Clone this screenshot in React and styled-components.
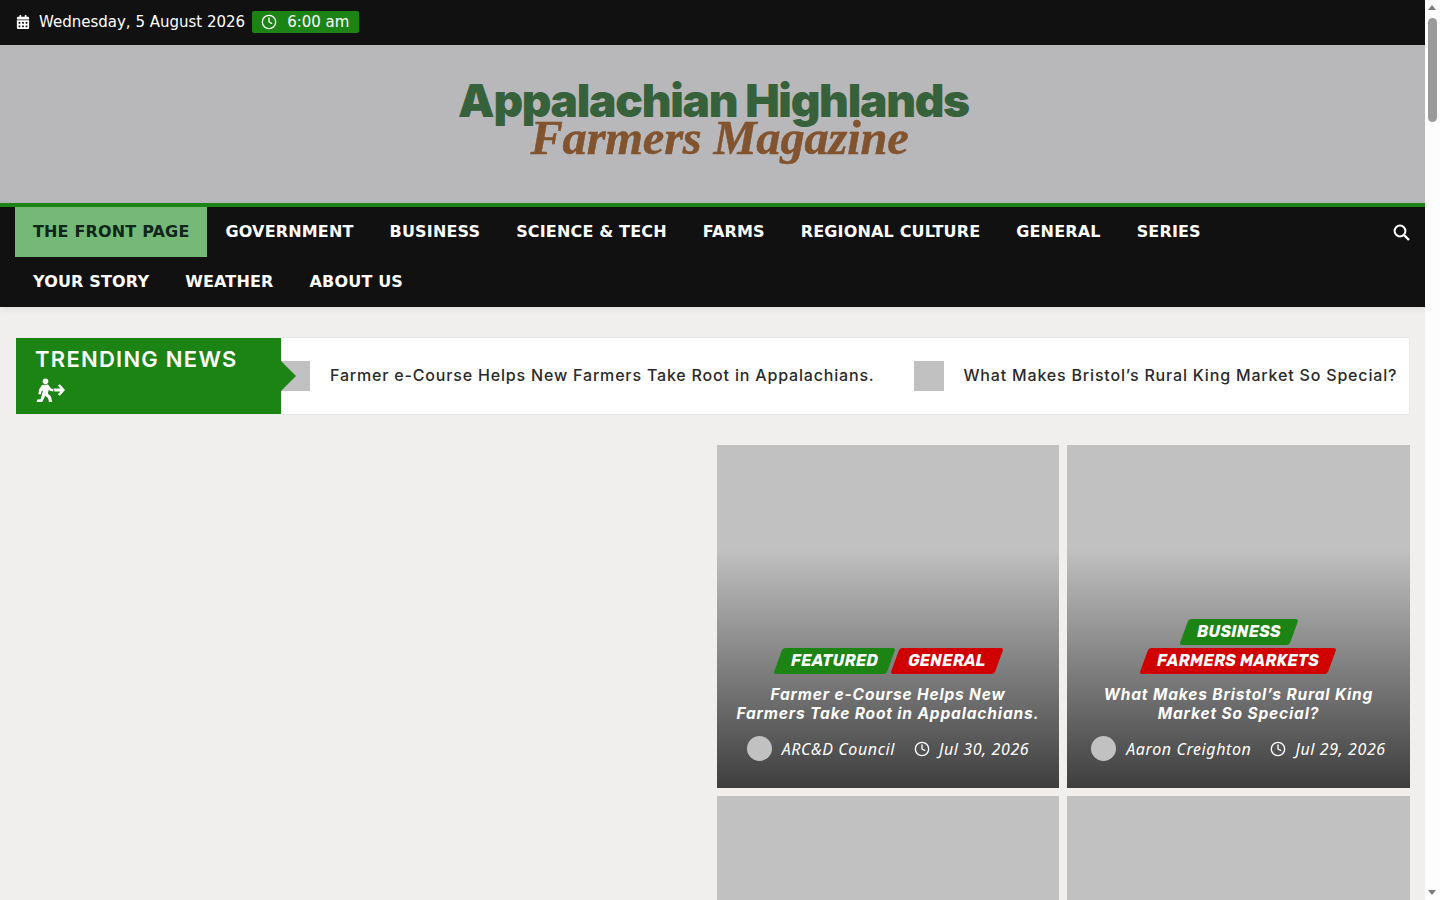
import React from "react";
import styled, { createGlobalStyle } from "styled-components";
import { FaCalendarAlt } from "react-icons/fa";
import { FiClock } from "react-icons/fi";

const GlobalStyle = createGlobalStyle`
  * { box-sizing: border-box; }
  body {
    margin: 0;
    background: #f0efed;
    font-family: "DejaVu Sans", sans-serif;
    color: #222;
  }
`;

const Page = styled.div`
  min-height: 7500px;
  padding-right: 15px;
`;

const ScrollTrack = styled.div`
  position: fixed;
  top: 0;
  right: 0;
  bottom: 0;
  width: 15px;
  background: #fdfdfd;
`;

const ScrollThumb = styled.div`
  position: absolute;
  top: 18px;
  left: 3px;
  width: 9px;
  height: 104px;
  border-radius: 5px;
  background: #9a9a9a;
`;

const ScrollArrow = styled.div`
  position: absolute;
  left: 3px;
  ${(props) => (props.$down ? "bottom: 5px;" : "top: 5px;")}
  border-left: 4.5px solid transparent;
  border-right: 4.5px solid transparent;
  ${(props) =>
    props.$down ? "border-top: 5px solid #7b7b7b;" : "border-bottom: 5px solid #7b7b7b;"}
`;

const TopBar = styled.div`
  height: 45px;
  background: #111112;
  color: #fff;
  display: flex;
  align-items: center;
  padding: 0 16px 2px;
  font-size: 15px;
`;

const DateText = styled.span`
  margin-left: 9px;
`;

const TimeBadge = styled.span`
  display: flex;
  align-items: center;
  gap: 10px;
  height: 22px;
  margin-left: 7px;
  padding: 0 10px 0 9px;
  background: #1b8415;
  border-radius: 2px;
`;

const Masthead = styled.header`
  height: 158px;
  background: #b8b8ba;
  display: flex;
  flex-direction: column;
  align-items: center;
  padding-top: 28px;
`;

const LogoTop = styled.div`
  padding-left: 2px;
  font-family: Inter, sans-serif;
  font-weight: 900;
  font-size: 46px;
  line-height: 54px;
  letter-spacing: -1.3px;
  color: #36613b;
`;

const LogoBottom = styled.div`
  margin-top: -15px;
  padding-left: 14px;
  font-family: "Liberation Serif", serif;
  font-weight: 700;
  font-style: italic;
  font-size: 48.5px;
  line-height: 52px;
  letter-spacing: -0.2px;
  -webkit-text-stroke: 0.5px #82532f;
  color: #82532f;
`;

const NavBar = styled.nav`
  background: #111112;
  border-top: 4px solid #1b8415;
  padding: 0 15px;
  display: flex;
  align-items: flex-start;
  justify-content: space-between;
  box-shadow: 0 2px 6px rgba(0, 0, 0, 0.08);
`;

const NavList = styled.div`
  display: flex;
  flex-wrap: wrap;
  width: 1240px;
`;

const NavItem = styled.a`
  height: 50px;
  display: flex;
  align-items: center;
  padding: 0 18px 2px;
  font-size: 16px;
  font-weight: 700;
  letter-spacing: 0.16px;
  text-transform: uppercase;
  color: ${(props) => (props.$active ? "#10261a" : "#fff")};
  background: ${(props) => (props.$active ? "#76b877" : "transparent")};
`;

const SearchButton = styled.span`
  color: #fff;
  height: 50px;
  display: flex;
  align-items: center;
`;

const Content = styled.main`
  padding: 30px 15px 0 16px;
`;

const Trending = styled.section`
  height: 78px;
  background: #fff;
  border: 1px solid #e8e8e8;
  border-left: 0;
  display: flex;
  align-items: center;
  overflow: hidden;
`;

const TrendingLabel = styled.div`
  position: relative;
  z-index: 1;
  flex: 0 0 265px;
  height: 76px;
  background: #1b8415;
  color: #fff;
  padding: 7px 19px 7px 20px;
  font-family: Inter, sans-serif;
  font-size: 22px;
  font-weight: 600;
  letter-spacing: 1.25px;
  line-height: 28px;
  text-indent: -1px;
  &::after {
    content: "";
    position: absolute;
    right: -15px;
    top: 23px;
    border-left: 15px solid #1b8415;
    border-top: 15px solid transparent;
    border-bottom: 15px solid transparent;
  }
`;

const RunIcon = styled.svg`
  display: block;
  margin-top: 5px;
`;

const Ticker = styled.div`
  display: flex;
  align-items: center;
  margin-left: -1px;
  white-space: nowrap;
`;

const TickerItem = styled.div`
  display: flex;
  align-items: center;
  flex: none;
  margin-right: 39px;
  font-family: Inter, sans-serif;
  font-size: 16px;
  font-weight: 500;
  letter-spacing: 0.82px;
  color: #2a2a2a;
`;

const TickerThumb = styled.span`
  width: 30px;
  height: 30px;
  margin-right: 20px;
  background: #c1c1c1;
`;

const TickerText = styled.span`
  margin-bottom: 2px;
`;

const Columns = styled.div`
  display: grid;
  grid-template-columns: 1fr 693px;
  margin-top: 30px;
`;

const CardGrid = styled.div`
  display: grid;
  grid-template-columns: 342px 343px;
  grid-auto-rows: 343px;
  gap: 8px;
`;

const Card = styled.article`
  background: ${(props) =>
    props.$empty
      ? "#c1c1c1"
      : "linear-gradient(to bottom, #c1c1c1 0, #c1c1c1 30%, #3e3e3e 100%)"};
  display: flex;
  flex-direction: column;
  justify-content: flex-end;
  align-items: center;
  padding: 0 15px 27px;
  color: #fff;
  text-align: center;
`;

const Tags = styled.div`
  display: flex;
  flex-wrap: wrap;
  justify-content: center;
  gap: 3px 0;
  width: 100%;
`;

const TagWrap = styled.div`
  flex: ${(props) => (props.$stacked ? "0 0 100%" : "none")};
  display: flex;
  justify-content: center;
  margin: 0 ${(props) => (props.$stacked ? "0" : "2px")};
`;

const Tag = styled.span`
  display: block;
  height: 26px;
  padding: 0 13px;
  transform: skew(-20deg);
  border-radius: 3px;
  background: ${(props) => props.$color};
  font-family: Rubik, "Noto Sans", sans-serif;
  font-size: 16px;
  line-height: 26px;
  font-weight: 700;
  font-style: italic;
  letter-spacing: 0.3px;
  text-transform: uppercase;
  white-space: nowrap;
  & > span {
    display: block;
    transform: skew(20deg);
  }
`;

const CardTitle = styled.h4`
  margin: 11px 0 0;
  font-family: Inter, sans-serif;
  font-size: 15.5px;
  line-height: 19px;
  font-weight: 700;
  font-style: italic;
  letter-spacing: 0.85px;
`;

const Meta = styled.div`
  display: flex;
  align-items: center;
  justify-content: center;
  margin-top: 13px;
  height: 25px;
  font-family: "Noto Sans", sans-serif;
  font-size: 16px;
  font-style: italic;
  letter-spacing: 0.6px;
  white-space: nowrap;
`;

const Avatar = styled.span`
  width: 25px;
  height: 25px;
  border-radius: 50%;
  background: #c1c1c1;
  margin-right: 10px;
`;

const MetaDate = styled.span`
  display: flex;
  align-items: center;
  gap: 9px;
  margin-left: 19px;
`;

const navItems = ["The Front Page", "Government", "Business", "Science & Tech", "Farms", "Regional Culture", "General", "Series", "Your Story", "Weather", "About Us"];

const stories = [
  {
    title: ["Farmer e-Course Helps New", "Farmers Take Root in Appalachians."],
    tags: [["Featured", "#1b8415"], ["General", "#d10000"]],
    author: "ARC&D Council",
    date: "Jul 30, 2026",
  },
  {
    title: ["What Makes Bristol’s Rural King", "Market So Special?"],
    tags: [["Business", "#1b8415"], ["Farmers Markets", "#d10000"]],
    author: "Aaron Creighton",
    date: "Jul 29, 2026",
    stacked: true,
  },
];

function RunningArrow() {
  return (
    <RunIcon width="30" height="24" viewBox="0 0 30 24" fill="#fff">
      <circle cx="9.5" cy="3.2" r="2.8" />
      <path d="M6 7 L12 6.6 L15.2 10.6 L17.5 11.2 L17.2 13.6 L13.8 12.8 L12.8 11.8 L11.8 15.4 L15 18.5 L16.2 24 L13 24 L12 20 L9.2 17.8 L6.2 24 L0.6 24 L1.2 21.4 L4.6 21.2 L7 12.4 L5.4 13.4 L4.8 16.6 L2.4 16.2 L3 11.4 Z" />
      <path d="M17.5 10.5 H24.5 L21.8 7.8 L23.8 6.2 L29 12 L23.8 17.8 L21.8 16.2 L24.5 13.5 H18.5 Z" />
    </RunIcon>
  );
}

function SearchGlyph() {
  return (
    <svg width="17" height="17" viewBox="0 0 17 17" fill="none" stroke="#fff">
      <circle cx="7" cy="7" r="5.4" strokeWidth="2" />
      <path d="M11 11 L16 16" strokeWidth="2.4" />
    </svg>
  );
}

function StoryCard({ story }) {
  return (
    <Card>
      <Tags>
        {story.tags.map(([name, color]) => (
          <TagWrap key={name} $stacked={story.stacked}>
            <Tag $color={color}><span>{name}</span></Tag>
          </TagWrap>
        ))}
      </Tags>
      <CardTitle>
        {story.title[0]}
        <br />
        {story.title[1]}
      </CardTitle>
      <Meta>
        <Avatar />
        {story.author}
        <MetaDate>
          <FiClock size={16} />
          {story.date}
        </MetaDate>
      </Meta>
    </Card>
  );
}

export default function App() {
  return (
    <Page>
      <GlobalStyle />
      <TopBar>
        <FaCalendarAlt size={14} />
        <DateText>Wednesday, 5 August 2026</DateText>
        <TimeBadge>
          <FiClock size={16} />
          6:00 am
        </TimeBadge>
      </TopBar>
      <Masthead>
        <LogoTop>Appalachian Highlands</LogoTop>
        <LogoBottom>Farmers Magazine</LogoBottom>
      </Masthead>
      <NavBar>
        <NavList>
          {navItems.map((item, index) => (
            <NavItem key={item} $active={index === 0}>{item}</NavItem>
          ))}
        </NavList>
        <SearchButton>
          <SearchGlyph />
        </SearchButton>
      </NavBar>
      <Content>
        <Trending>
          <TrendingLabel>
            TRENDING NEWS
            <RunningArrow />
          </TrendingLabel>
          <Ticker>
            <TickerItem>
              <TickerThumb />
              <TickerText>Farmer e-Course Helps New Farmers Take Root in Appalachians.</TickerText>
            </TickerItem>
            <TickerItem>
              <TickerThumb />
              <TickerText>What Makes Bristol’s Rural King Market So Special?</TickerText>
            </TickerItem>
          </Ticker>
        </Trending>
        <Columns>
          <div />
          <CardGrid>
            {stories.map((story) => (
              <StoryCard key={story.date} story={story} />
            ))}
            <Card $empty />
            <Card $empty />
          </CardGrid>
        </Columns>
      </Content>
      <ScrollTrack>
        <ScrollArrow />
        <ScrollThumb />
        <ScrollArrow $down />
      </ScrollTrack>
    </Page>
  );
}
